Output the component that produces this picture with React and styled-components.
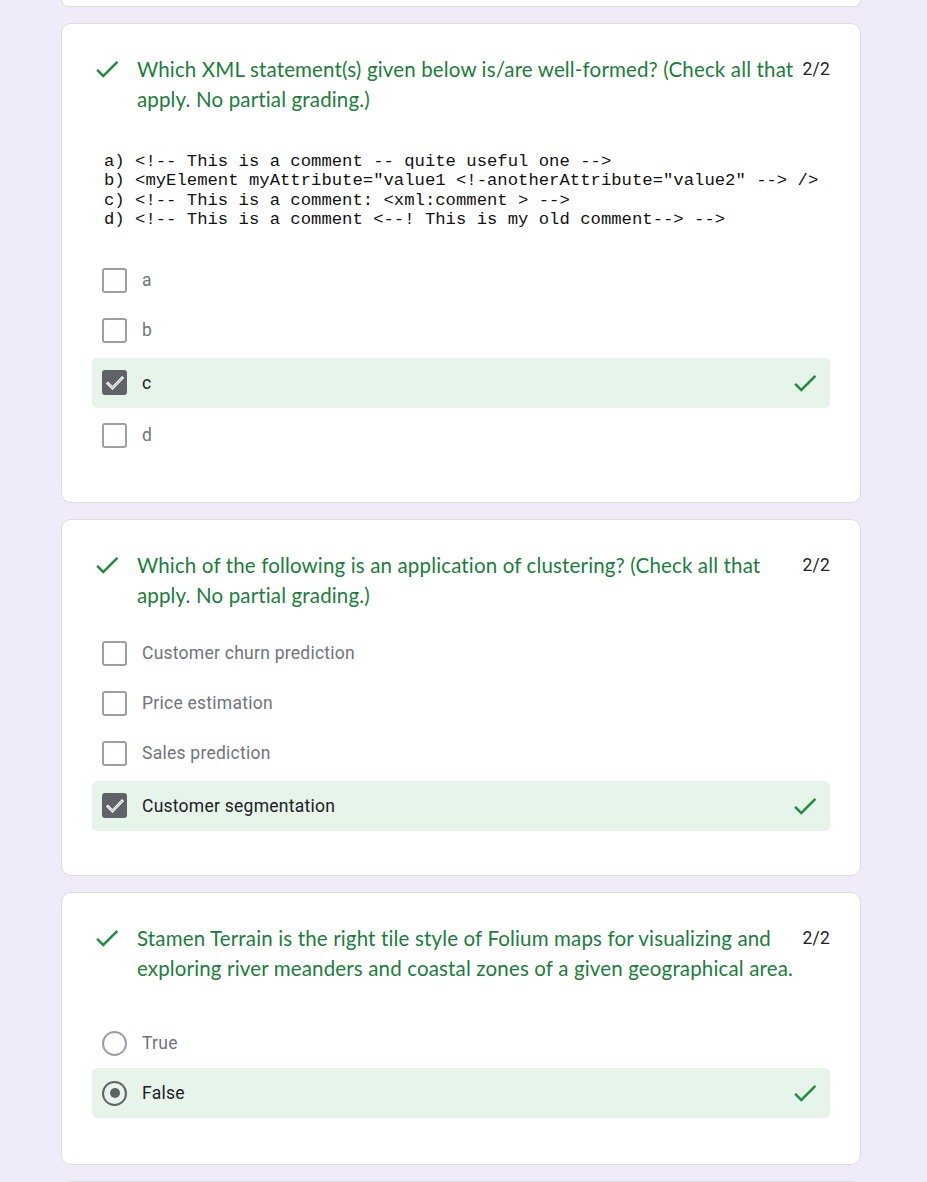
import React from "react"
import styled, { createGlobalStyle } from "styled-components"

const GlobalStyle = createGlobalStyle`
    html, body {
        margin: 0;
        padding: 0;
        background: #f0ebf8;
    }
    * { box-sizing: border-box; }`

const Page = styled.div`
    display: flex;
    flex-direction: column;
    gap: 16px;
    padding-left: 61px;
    width: 861px;`

const Stub = styled.div`
    height: 7px;
    background: #fff;
    border: 1px solid #dadce0;
    border-top: none;
    border-radius: 0 0 10px 10px;`

const Card = styled.div`
    background: #fff;
    border: 1px solid #dadce0;
    border-radius: 10px;
    padding: 30px 30px ${p => p.$bottom ?? 43}px;
    min-height: ${p => p.$minHeight || 0}px;`

const TitleRow = styled.div`
    display: flex;
    align-items: flex-start;`

const TitleIcon = styled.div`
    width: 30px;
    height: 30px;
    flex-shrink: 0;
    margin-right: 15px;
    display: flex;
    align-items: center;
    justify-content: center;`

const Title = styled.div`
    flex: 1;
    min-width: 0;
    font-family: Lato, "Open Sans", sans-serif;
    font-size: 20.5px;
    letter-spacing: 0.15px;
    line-height: 30px;
    color: #188038;
    span {
        display: block;
        white-space: nowrap;
    }`

const Points = styled.div`
    flex-shrink: 0;
    font-family: Roboto, sans-serif;
    font-size: 17.5px;
    line-height: 30px;
    color: #202124;
    letter-spacing: 0.2px;
    margin-left: 12px;`

const Code = styled.pre`
    margin: 38px 0 0 12px;
    font-family: "Liberation Mono", monospace;
    font-size: 17.25px;
    line-height: 19.3px;
    color: #111;`

const OptionList = styled.div`
    display: flex;
    flex-direction: column;
    margin-top: ${p => p.$top}px;
    padding-bottom: ${p => p.$bottom || 0}px;`

const Option = styled.div`
    height: 50px;
    display: flex;
    align-items: center;
    padding: 0 10px;
    border-radius: 5px;
    margin: ${p => (p.$correct && p.$spaced ? "2.5px 0" : "0")};
    background: ${p => (p.$correct ? "#e6f4ea" : "transparent")};`

const Box = styled.div`
    width: 25px;
    height: 25px;
    flex-shrink: 0;
    border-radius: 3px;
    border: ${p => (p.$checked ? "none" : "2.5px solid #9aa0a6")};
    background: ${p => (p.$checked ? "#5f6368" : "#fff")};
    display: flex;
    align-items: center;
    justify-content: center;`

const Radio = styled.div`
    width: 25px;
    height: 25px;
    flex-shrink: 0;
    border-radius: 50%;
    border: 2.5px solid ${p => (p.$checked ? "#5f6368" : "#9aa0a6")};
    display: flex;
    align-items: center;
    justify-content: center;
    &::after {
        content: "";
        display: ${p => (p.$checked ? "block" : "none")};
        width: 10px;
        height: 10px;
        border-radius: 50%;
        background: #5f6368;
    }`

const Label = styled.div`
    flex: 1;
    margin-left: 15px;
    font-family: Roboto, sans-serif;
    font-size: 17.5px;
    letter-spacing: 0.25px;
    color: ${p => (p.$checked ? "#202124" : "#70757a")};`

const RowIcon = styled.div`
    width: 30px;
    height: 30px;
    display: flex;
    align-items: center;
    justify-content: center;`

const CheckIcon = ({ size = 30 }) => (
    <svg width={size} height={size} viewBox="0 0 24 24">
        <path fill="#1e8e3e" d="M9 16.17L4.83 12l-1.42 1.41L9 19 21 7l-1.41-1.41z" />
    </svg>
)

const BoxTick = () => (
    <svg width="20" height="20" viewBox="0 0 24 24" fill="none">
        <polyline points="3.5,12.5 9,18 20.5,6" stroke="#fff" strokeWidth="3.4" strokeLinecap="square" />
        <polyline points="3.5,12.5 9,18 20.5,6" stroke="#8a8e93" strokeWidth="1" />
    </svg>
)

const Question = ({ lines }) => (
    <TitleRow>
        <TitleIcon><CheckIcon /></TitleIcon>
        <Title>{lines.map((l, i) => <span key={i}>{l}</span>)}</Title>
        <Points>2/2</Points>
    </TitleRow>
)

const Choice = ({ kind, label, checked, spaced }) => (
    <Option $correct={checked} $spaced={spaced}>
        {kind === "radio"
            ? <Radio $checked={checked} />
            : <Box $checked={checked}>{checked && <BoxTick />}</Box>}
        <Label $checked={checked}>{label}</Label>
        {checked && <RowIcon><CheckIcon /></RowIcon>}
    </Option>
)

const code = `a) <!-- This is a comment -- quite useful one -->
b) <myElement myAttribute="value1 <!-anotherAttribute="value2" --> />
c) <!-- This is a comment: <xml:comment > -->
d) <!-- This is a comment <--! This is my old comment--> -->`

export default function App () {
    return (
        <>
            <GlobalStyle />
            <Page>
                <Stub />
                <Card $bottom={42}>
                    <Question lines={[
                        "Which XML statement(s) given below is/are well-formed? (Check all that",
                        "apply. No partial grading.)",
                    ]} />
                    <Code>{code}</Code>
                    <OptionList $top={26}>
                        {["a", "b", "c", "d"].map(o =>
                            <Choice key={o} label={o} checked={o === "c"} spaced />
                        )}
                    </OptionList>
                </Card>
                <Card $bottom={42}>
                    <Question lines={[
                        "Which of the following is an application of clustering? (Check all that",
                        "apply. No partial grading.)",
                    ]} />
                    <OptionList $top={18}>
                        {["Customer churn prediction", "Price estimation", "Sales prediction", "Customer segmentation"].map(o =>
                            <Choice key={o} label={o} checked={o === "Customer segmentation"} spaced />
                        )}
                    </OptionList>
                </Card>
                <Card>
                    <Question lines={[
                        "Stamen Terrain is the right tile style of Folium maps for visualizing and",
                        "exploring river meanders and coastal zones of a given geographical area.",
                    ]} />
                    <OptionList $top={35} $bottom={3}>
                        <Choice kind="radio" label="True" />
                        <Choice kind="radio" label="False" checked />
                    </OptionList>
                </Card>
                <Card $minHeight={120} />
            </Page>
        </>
    )
}
